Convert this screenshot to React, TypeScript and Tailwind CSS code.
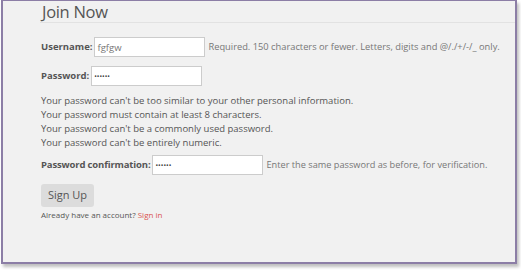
export default function App() {
  return (
    <div className="w-[521px] h-[270px] bg-white" style={{ fontFamily: '"Open Sans", sans-serif' }}>
      <div className="ml-[1px] w-[516px] h-[264px] bg-[#f1f1f1] border-x-2 border-b-2 border-t border-[#8c7ea6] shadow-[2px_3px_3px_rgba(0,0,0,0.25)]">
        <div className="ml-[37px] border-b border-[#e2e2e2] h-[22px]">
          <h2 className="text-[16.5px] leading-[22px] text-[#555] pl-[2px] tracking-[-0.3px]">Join Now</h2>
        </div>
        <div className="pl-[38px] pt-[14px] text-[9.5px] text-[#555]">
          <div className="flex items-center gap-[2px] h-[20px]">
            <label className="font-bold">Username:</label>
            <input readOnly value="fgfgw" className="w-[111px] h-[20px] bg-white border border-[#ccc] px-[2px] text-[9.5px] text-[#777] outline-none" />
            <span className="ml-[1px] text-[9.3px] text-[#777]">Required. 150 characters or fewer. Letters, digits and @/./+/-/_ only.</span>
          </div>
          <div className="flex items-center gap-[2px] h-[20px] mt-[9px]">
            <label className="font-bold">Password:</label>
            <input readOnly type="password" value="••••••" className="w-[111px] h-[20px] bg-white border border-[#ccc] px-[2px] text-[7px] text-[#444] outline-none" />
          </div>
          <div className="mt-[8px] leading-[14px] text-[#555]">
            <p>Your password can't be too similar to your other personal information.</p>
            <p>Your password must contain at least 8 characters.</p>
            <p>Your password can't be a commonly used password.</p>
            <p>Your password can't be entirely numeric.</p>
          </div>
          <div className="flex items-center gap-[2px] h-[20px] mt-[5px]">
            <label className="font-bold tracking-[-0.15px]">Password confirmation:</label>
            <input readOnly type="password" value="••••••" className="w-[111px] h-[20px] bg-white border border-[#ccc] px-[2px] text-[7px] text-[#444] outline-none" />
            <span className="ml-[1px] text-[9.2px] text-[#777]">Enter the same password as before, for verification.</span>
          </div>
          <button className="mt-[9px] w-[53px] h-[23px] bg-[#dcdcdc] rounded-[3px] text-[11px] text-[#555]">Sign Up</button>
          <p className="mt-[2px] text-[8px] text-[#555]">
            Already have an account? <span className="text-[#d9534f]">Sign in</span>
          </p>
        </div>
      </div>
    </div>
  );
}
